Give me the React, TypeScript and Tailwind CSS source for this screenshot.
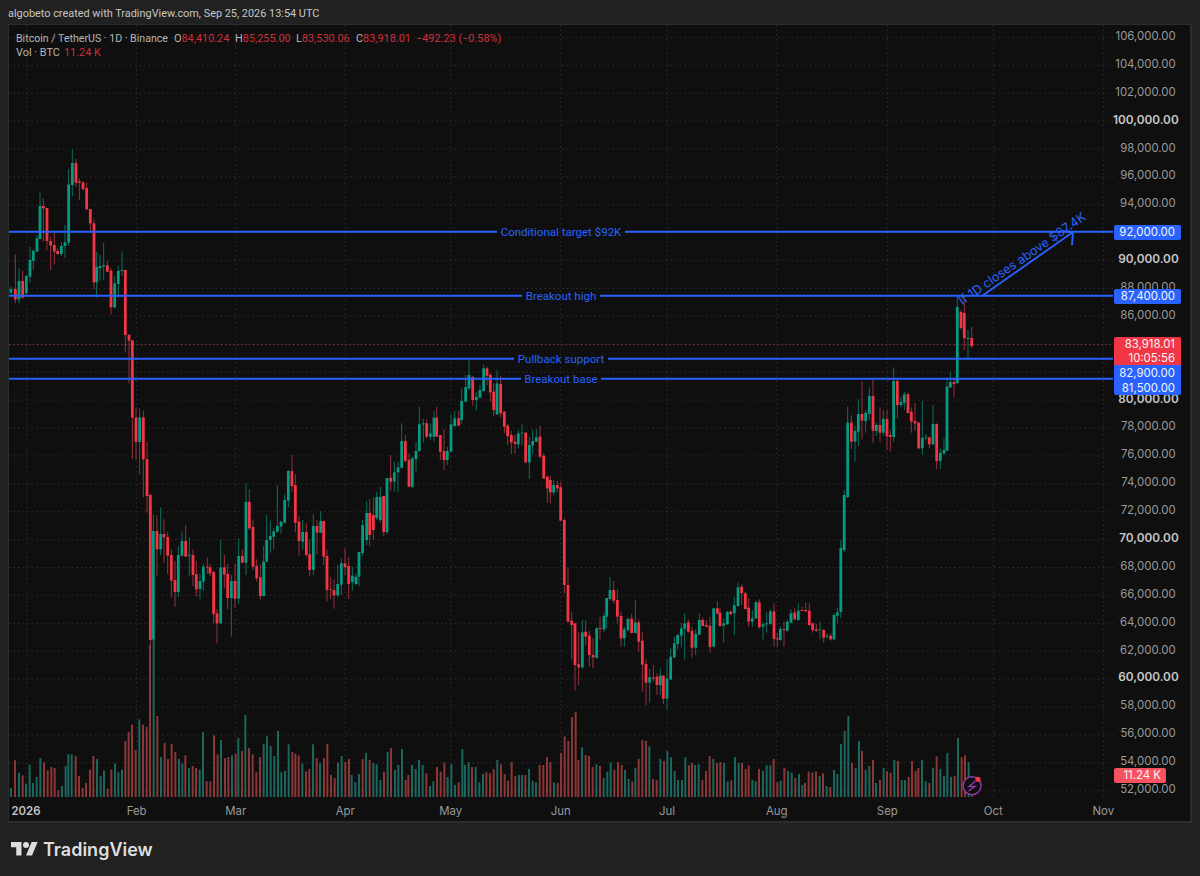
import React from "react";

type C = [number, number, number, number, number, number];
// [x, teal?, body top, body bottom, high, low] in the coordinates of each group
const groups: { x0: number; y0: number; s: number; d: C[] }[] = [
  { x0: 0, y0: 140, s: 3, d: [
    [33,1,447,458,440,470],[46,0,447,478,343,490],[57,1,423,478,385,490],[68,0,423,473,393,475],[79,1,408,460,405,462],[90,1,360,410,320,427],[100,1,333,362,327,390],[111,1,295,335,285,335],[120,1,198,297,157,298],[130,0,198,205,175,305],[141,0,204,303,204,330],[152,0,303,317,290,390],[163,0,315,335,275,373],[173,0,333,342,325,345],[184,1,318,342,308,348],[195,1,307,318,255,354],[206,1,133,308,87,318],[217,1,69,135,28,168],[228,0,69,128,57,142],[238,0,124,128,115,180],[249,0,127,148,125,150],[260,0,144,208,128,210],[271,0,207,250,207,278],[282,0,250,427,238,448],[290,1,381,427,335,473],[300,1,378,384,344,422],[311,1,376,380,308,420],[322,0,376,395,362,397],[333,0,392,502,385,524],[344,1,430,502,408,505],[355,1,393,432,378,473],[366,1,390,393,335,408],[376,0,390,585,388,638],[387,0,585,602,582,730],[397,0,601,833,601,958],[408,0,833,906,803,960],[419,1,832,906,805,1003],[430,0,832,958,812,1071],[441,0,957,1068,905,1118],
  ]},
  { x0: 120, y0: 460, s: 3, d: [
    [91,0,105,540,100,555],[100,1,213,538,163,540],[111,0,213,268,165,348],[122,1,222,268,142,285],[132,0,222,232,178,308],[143,0,231,287,215,342],[154,0,285,362,268,412],[165,0,360,396,303,440],[175,1,285,396,258,412],[186,1,243,287,215,292],[197,0,243,290,196,290],[208,1,284,287,232,350],[219,0,285,345,268,378],[229,0,343,388,302,410],[240,1,363,387,340,418],[250,1,320,365,310,392],[262,0,320,323,293,342],[270,0,322,340,312,348],[281,0,335,462,335,490],[291,0,460,490,448,550],[302,1,322,490,240,492],[313,0,322,344,285,385],[323,0,342,414,312,448],[334,1,363,414,345,530],[345,0,363,416,312,443],[356,1,288,416,235,432],[367,0,288,308,268,308],[378,1,126,308,70,345],[388,0,126,205,88,210],[399,0,201,320,178,330],[410,0,318,355,298,365],[421,0,352,408,312,418],[431,1,305,408,258,410],[440,1,240,305,165,305],[451,1,228,240,182,278],[461,1,214,230,205,268],[472,1,198,215,75,218],[483,1,185,200,182,222],[494,1,120,188,103,190],[505,1,33,122,30,142],[516,0,33,78,-15,95],[526,0,75,188,42,217],[537,0,185,243,168,287],[548,1,216,245,180,270],[559,0,216,285,190,290],[569,0,283,330,238,347],[580,1,198,330,162,345],[591,0,198,218,180,283],[602,1,183,218,153,220],[611,0,183,290,183,315],[621,0,288,390,270,425],[632,0,388,390,352,418],[642,0,390,406,358,446],[653,1,372,406,315,410],[664,1,310,374,295,405],[675,0,310,322,265,345],[686,0,318,372,292,417],[697,1,347,366,320,392],[708,1,350,372,340,375],[717,1,276,350,276,378],
  ]},
  { x0: 0, y0: 0, s: 1, d: [
    [362.6,1,525,553,520,556],[366.7,1,513,540,501,545],[369.7,0,513,535,499,546],[373.4,0,515,530,497,540],[376.7,1,497,518,492,520],[380.3,1,497,520,487,522],[383.7,0,496,532,496,536],[387,1,478,532,478,534],
    [840.8,1,548,612,540,618],[844.2,1,495,550,490,552],
    [957.3,1,307,383,296,384],[961,0,312,328,310,330],[964.3,0,313,338,298,350],[968,1,338,339,330,358],[971.7,0,338,346,327,348],
  ]},
  { x0: 340, y0: 355, s: 3, d: [
    [152,0,368,380,300,408],[163,1,352,380,320,410],[174,1,337,352,320,412],[185,1,258,338,205,340],[196,0,258,318,240,322],[207,0,315,395,295,395],[217,1,310,395,305,398],[228,1,288,312,262,350],[238,1,208,288,155,290],[250,1,205,208,192,262],[260,0,205,245,192,250],[271,1,235,245,205,255],[282,1,188,245,168,260],[290,0,188,245,155,245],[301,0,240,290,240,315],[312,0,288,315,222,345],[322,1,288,315,275,330],[333,1,208,290,178,292],[344,1,190,213,168,215],[356,0,190,212,168,210],[365,1,138,195,100,207],[377,1,96,140,60,142],[387,1,60,100,15,105],[398,0,66,135,62,152],[409,1,125,135,112,165],[420,1,105,128,90,130],[431,1,40,108,30,110],[441,0,40,62,35,90],[451,0,60,112,55,140],[461,0,110,165,85,183],[471,1,85,178,45,180],[482,0,87,175,63,188],[493,0,170,215,168,235],[503,0,212,243,208,270],[514,0,240,262,228,297],[525,0,260,267,240,295],[535,1,235,268,225,280],[546,1,233,235,208,270],[557,0,233,322,232,325],[568,1,270,322,245,372],[578,1,258,272,225,298],[589,1,247,260,222,262],[600,0,245,305,212,310],[611,0,302,370,295,372],[622,0,365,400,362,443],[631,0,375,412,362,445],[641,1,390,412,375,420],[652,0,390,400,378,412],[662,0,397,497,380,497],
  ]},
  { x0: 555, y0: 570, s: 3, d: [
    [28,0,-150,45,-155,70],[39,0,45,155,-5,155],[50,0,152,165,125,268],[60,0,160,285,160,362],[71,0,283,292,185,345],[82,1,187,292,150,297],[92,0,185,200,152,225],[103,0,197,255,183,290],[114,0,255,262,205,295],[125,1,175,264,170,265],[135,0,174,177,140,208],[147,1,138,178,128,185],[155,1,84,140,84,175],[165,1,60,87,20,92],[176,0,60,92,32,100],[187,0,90,140,57,160],[198,0,138,205,125,230],[208,1,178,205,170,230],[219,1,147,180,143,185],[230,0,146,189,132,190],[241,1,157,189,90,190],[251,0,157,215,148,245],[262,0,212,284,185,365],[273,0,282,338,268,405],[284,1,322,338,295,397],[295,0,322,326,285,335],[306,0,320,345,310,375],[316,1,317,345,295,375],[325,0,317,386,315,402],[336,1,325,386,268,418],[347,1,260,328,235,330],[358,1,220,262,200,265],[368,1,195,222,192,238],[379,1,175,197,158,232],[389,1,160,176,130,268],[400,0,157,185,148,188],[411,0,183,233,170,263],[422,1,192,233,178,255],[433,1,150,194,130,195],[443,0,150,168,142,168],[454,0,165,170,150,172],[465,0,167,231,140,248],[476,1,115,230,115,232],[487,0,115,130,93,135],[495,0,128,168,115,170],[506,1,160,167,145,218],[517,1,125,163,123,165],[527,0,125,133,120,135],[538,1,106,130,80,195],[549,1,52,108,37,110],[560,0,50,70,43,105],[571,0,70,117,65,118],[581,0,113,155,85,170],[592,1,145,155,120,170],[603,1,97,145,93,147],[613,0,97,172,88,175],[624,1,163,170,155,210],[635,1,160,163,127,188],[646,1,124,162,118,165],[657,0,124,207,100,230],[667,0,205,208,190,230],[676,1,177,210,170,212],[687,0,177,180,155,230],[697,1,155,182,150,185],[708,1,130,158,118,160],[719,0,128,148,115,150],[730,1,122,150,100,152],[741,0,120,123,110,123],[752,0,120,124,98,125],[763,0,122,165,100,168],[773,0,160,180,158,188],[784,0,178,183,162,185],[795,1,178,180,157,208],[806,0,180,203,178,218],[816,1,197,200,190,205],[827,0,197,208,190,212],[837,1,135,208,130,210],[847,1,127,137,113,158],
  ]},
  { x0: 830, y0: 350, s: 3, d: [
    [53,1,218,441,170,445],[64,0,218,275,196,297],[75,1,243,275,228,335],[85,1,192,245,148,288],[96,0,192,212,95,268],[107,1,188,213,180,248],[118,1,138,192,112,210],[129,0,138,242,85,278],[139,1,225,243,218,258],[150,0,225,248,172,275],[160,1,207,248,180,258],[171,0,207,259,180,300],[181,0,255,261,240,304],[191,1,93,261,52,275],[202,0,93,165,87,205],[213,1,155,165,140,172],[223,1,133,158,125,180],[234,0,133,189,128,190],[244,0,185,215,172,248],[255,0,213,220,158,243],[266,0,218,295,215,297],[277,1,263,295,153,315],[288,1,262,264,252,272],[298,0,262,283,260,295],[309,1,222,283,165,285],[320,0,222,333,220,358],[331,1,308,333,295,357],[342,1,300,310,265,315],[351,1,110,302,85,302],[361,1,96,112,67,114],[372,0,96,102,85,142],
  ]},
];

const candles = groups.flatMap((g) =>
  g.d.map(([x, t, a, b, h, l]) => ({
    x: g.x0 + x / g.s,
    teal: t === 1,
    top: g.y0 + a / g.s,
    bottom: g.y0 + b / g.s,
    high: g.y0 + h / g.s,
    low: g.y0 + l / g.s,
  }))
);

// volume: "zoomX,colour,zoomTop"
const v1 =
  "33t228 45r145 57t182 68r190 78t215 89t158 99t213 110t195 121t138 132r152 143r175 154r165 164r168 175r235 186t222 197t162 205t127 215t127 227r132 237r192 248r228 258r213 270r173 280r132 291t141 302t192 312t176 323r230 334r173 345t154 355t181 366t173 376r87 386r60 396r38 407r114 418t22 429r38 440r44 450r-201 461t-219 472r12 483t135 494r93 504r141 515r96 526r120 537t141 547t154 556r130 567t168 578r162 588r168 599t173 609t60 620r208 631r208 642r70 653r127 663t84 675r138 685r135 696t130 707r125 715t78 726r117 736t9 747r108 758r127 769r181 780r135 791t96 801t73 812t102 823t132 834t57 844t181 855t177 866t97 877r120 886r125 896r130 907t154 918r178 928r171 939t97 950r138 960t154 972r138 982r96 993r189 1004r198 1014t152";
const v2 =
  "5t132 16r150 27r141 35t189 46t211 57t186 68r141 78t123 89r144 100t153 110t157 121t204 132r179 143t120 153r108 165t174 175t159 186t111 197r204 205r189 216t159 227t171 237t144 248t159 259r184 270t222 280t208 291r165 302r179 313r152 323t195 334t157 345t219 356r211 367t111 375t159 386t150 396r165 407t165 418t211 429t186 439r181 450r184 461r171 472t144 483r157 494r186 504r206 515r150 526r192 537t189 546t189 556r189 567t171 578t206 588t211 599r159 610r159 621r135 631r150 642t211 653r213 663r123 674r73 685r87 696r15 707r0 715r144 726t106 737r129 747r132 758r165 769t157 780r162 791t198 802t179 812t152 823r174 834r150 845r159 855t174 866t201 877r208 886t168 896r141 907r84 918r87 928t103 939r201 950r204 961t141 972r147 982t117 993t136 1004t177 1014t204";
const v3 =
  "66t204 76t136 87r160 96r153 105t159 116t157 127r204 138r177 149r132 160t141 171r153 181r150 192t153 203t208 214r205 225t136 236t153 246r153 257r171 266r160 277t204 287t208 297r171 309t177 320t160 331t160 341r141 352r211 362t206 373r168 384t177 395t182 406r198 417t186 427t219 435r213 446r179 457r182 468r179 479t192 489r184 500t222 511r225 522t174 532t186 543t96 554t57 565t12 576r153 587t168 597t87 606r117 617t174 628t162 639r144 648t213 660r204 671t168 681r177 692r182 703t144 714r147 725t204 735t204 746r195 756r147 767r177 775r168 786t144 797t208 808r213 819t168 830r133 841t171 852t192 862t123 873t195 884r192 894t78 905r136 915r130 926t150 937r250";
const parseVol = (s: string, x0: number) =>
  s.split(" ").map((e) => {
    const m = e.match(/^(\d+)([tr])(-?\d+)$/)!;
    return { x: x0 + Number(m[1]) / 3, teal: m[2] === "t", top: 712 + Number(m[3]) / 3 };
  });
const volumes = [...parseVol(v1, 0), ...parseVol(v2, 340), ...parseVol(v3, 660)];

const gridX = [26.7, 136.6, 235.7, 345.2, 450.7, 560.7, 667, 776.7, 887.3, 993.3, 1103.3];
const prices: number[] = [];
for (let p = 106000; p >= 52000; p -= 2000) prices.push(p);
const gy = (p: number) => 149 + (98000 - p) * 0.01395;
const fmt = (p: number) => p.toLocaleString("en-US") + ".00";
const bright = new Set([100000, 90000, 80000, 70000, 60000]);
const hiddenByTag = new Set([92000, 84000, 82000]);

const months = [
  { t: "2026", x: 26, b: true },
  { t: "Feb", x: 136.6 },
  { t: "Mar", x: 235.7 },
  { t: "Apr", x: 345.2 },
  { t: "May", x: 450.7 },
  { t: "Jun", x: 560.7 },
  { t: "Jul", x: 667 },
  { t: "Aug", x: 776.7 },
  { t: "Sep", x: 887.3 },
  { t: "Oct", x: 993.3 },
  { t: "Nov", x: 1103.3 },
];

const hlines = [
  { y: 231.7, a: 497, b: 625 },
  { y: 295.7, a: 522, b: 600 },
  { y: 358.7, a: 514, b: 608 },
  { y: 378.7, a: 521, b: 601 },
];

const BLUE = "#2962ff";

function Chart() {
  return (
    <svg viewBox="9 25 1104 772" className="block w-[1104px] h-[772px]">
      {gridX.map((x) => (
        <line key={x} x1={x} x2={x} y1={25} y2={797} stroke="#2e2e2e" strokeWidth={1} strokeDasharray="1.5 3" />
      ))}
      {prices.map((p) => (
        <line key={p} x1={9} x2={1113} y1={gy(p)} y2={gy(p)} stroke="#2e2e2e" strokeWidth={1} strokeDasharray="1.5 3" />
      ))}
      {volumes.map((v, i) => (
        <rect key={i} x={v.x - 1} y={v.top} width={2} height={Math.max(0, 797 - v.top)} fill={v.teal ? "#1b675e" : "#8b3737"} />
      ))}
      {candles.map((c, i) => (
        <g key={i}>
          <rect x={c.x - 0.5} y={c.high} width={1} height={Math.max(0, c.low - c.high)} fill={c.teal ? "#0b6f5f" : "#99303b"} />
          <rect x={c.x - 1.4} y={c.top} width={2.8} height={Math.max(0.8, c.bottom - c.top)} fill={c.teal ? "#089981" : "#f23645"} />
        </g>
      ))}
      <line x1={9} x2={1113} y1={344.7} y2={344.7} stroke="#f23645" strokeOpacity={0.65} strokeWidth={1} strokeDasharray="1.5 2.5" />
      {hlines.map((l) => (
        <g key={l.y} stroke={BLUE} strokeWidth={1.9}>
          <line x1={9} x2={l.a} y1={l.y} y2={l.y} />
          <line x1={l.b} x2={1113} y1={l.y} y2={l.y} />
        </g>
      ))}
      <g stroke={BLUE} strokeWidth={1.9} fill="none">
        <path d="M982 296L1073 232" />
        <path d="M1062 231L1073 232L1072 245" />
      </g>
      <g fill="none">
        <circle cx={972} cy={785.7} r={9} stroke="#8f3aa8" strokeWidth={1.5} fill="#0f0f0f" />
        <path d="M975.5 781L969 786.5H975L968.5 791" stroke="#8f3aa8" strokeWidth={1.4} />
        <circle cx={978} cy={779.3} r={2.6} fill="#f23645" />
      </g>
    </svg>
  );
}

const lineLabels = [
  { t: "Conditional target $92K", top: "top-[199px]" },
  { t: "Breakout high", top: "top-[263px]" },
  { t: "Pullback support", top: "top-[326px]" },
  { t: "Breakout base", top: "top-[346px]" },
];

export default function App() {
  return (
    <div className="w-[1200px] h-[876px] bg-[#212121] flex flex-col overflow-hidden font-['Inter',sans-serif] text-[11.4px]">
      <div className="h-[24px] pl-[8px] pt-[6px] leading-[16px] text-[#c6c6c6] whitespace-nowrap font-['Roboto',sans-serif] text-[10.9px]">
        algobeto created with TradingView.com, Sep 25, 2026 13:54 UTC
      </div>
      <div className="relative ml-[8px] w-[1184px] h-[799px] border-l border-t border-r-2 border-b-2 border-[#2d2d2d] bg-[#0f0f0f] flex">
        <div className="w-[1104px] flex flex-col">
          <Chart />
          <div className="relative h-[24px] text-[#9a9a9a]">
            {months.map((m) => (
              <span
                key={m.t}
                className={`absolute top-[6px] -translate-x-1/2 leading-[16px] ${m.b ? "font-semibold text-[#c4c4c4]" : ""}`}
                style={{ left: m.x - 9 }}
              >
                {m.t}
              </span>
            ))}
          </div>
        </div>
        <div className="relative flex-1 flex flex-col items-end pr-[15px] text-[#9a9a9a]">
          {prices.map((p) => (
            <div
              key={p}
              className={`h-[27.9px] leading-[27.9px] whitespace-nowrap first:mt-[-2px] ${bright.has(p) ? "font-semibold text-[11.8px] text-[#c8c8c8] mr-[-3px]" : ""}`}
            >
              {hiddenByTag.has(p) ? "" : fmt(p)}
            </div>
          ))}
          <div className="absolute left-[1px] top-[200px] w-[67px] h-[15px] leading-[15px] bg-[#2962ff] text-[#f5f5f5] text-right pr-[6px] rounded-[2px]">92,000.00</div>
          <div className="absolute left-[1px] top-[264px] w-[67px] h-[15px] leading-[15px] bg-[#2962ff] text-[#f5f5f5] text-right pr-[6px] rounded-[2px]">87,400.00</div>
          <div className="absolute left-[1px] top-[312px] w-[67px] h-[28px] leading-[14px] bg-[#f23645] text-[#f5f5f5] text-right pr-[6px] rounded-t-[2px]">
            <div>83,918.01</div>
            <div>10:05:56</div>
          </div>
          <div className="absolute left-[1px] top-[340px] w-[67px] h-[16px] leading-[16px] bg-[#2962ff] text-[#f5f5f5] text-right pr-[6px]">82,900.00</div>
          <div className="absolute left-[1px] top-[356px] w-[67px] h-[14px] leading-[14px] bg-[#2962ff] text-[#f5f5f5] text-right pr-[6px] rounded-b-[2px]">81,500.00</div>
          <div className="absolute left-[1px] top-[743px] w-[52px] h-[15px] leading-[15px] bg-[#f7525f] text-[#f5f5f5] text-right pr-[5px] rounded-[2px]">11.24 K</div>
        </div>

        {/* legend */}
        <div className="absolute left-[7px] top-[7px] leading-[14px] text-[#b6b6b6] whitespace-nowrap font-['Roboto',sans-serif] text-[10.9px]">
          <div className="flex h-[14px]">
            <span className="w-[158px] text-[10.6px]">Bitcoin / TetherUS · 1D · Binance</span>
            <span className="w-[61px]">O<span className="text-[#cf2f3d]">84,410.24</span></span>
            <span className="w-[61px]">H<span className="text-[#cf2f3d]">85,255.00</span></span>
            <span className="w-[60px]">L<span className="text-[#cf2f3d]">83,530.06</span></span>
            <span className="w-[60px]">C<span className="text-[#cf2f3d]">83,918.01</span></span>
            <span className="text-[#cf2f3d]">−492.23 (−0.58%)</span>
          </div>
          <div className="flex h-[14px]">
            <span className="w-[48px]">Vol · BTC</span>
            <span className="text-[#cf2f3d]">11.24 K</span>
          </div>
        </div>

        {/* drawing labels */}
        {lineLabels.map((l) => (
          <span key={l.t} className={`absolute left-[552px] -translate-x-1/2 leading-[16px] text-[#2962ff] whitespace-nowrap font-['Roboto',sans-serif] text-[11.5px] ${l.top}`}>
            {l.t}
          </span>
        ))}
        <span className="absolute left-[951px] top-[269px] origin-left rotate-[-34.8deg] leading-[16px] text-[#2962ff] whitespace-nowrap text-[12.5px]">
          If 1D closes above $87.4K
        </span>
      </div>
      <div className="flex-1 flex items-start pl-[11px] pt-[15px] gap-[5px] text-[#dedede]">
        <svg viewBox="0 4 36 18" className="w-[27px] h-[13.5px] mt-[4px]">
          <path d="M14 22H7V11H0V4h14v18zM28 22h-8l7.5-18h8L28 22z" fill="currentColor" />
          <circle cx="20" cy="8" r="4" fill="currentColor" />
        </svg>
        <span className="text-[18px] leading-[24px] font-semibold whitespace-nowrap">TradingView</span>
      </div>
    </div>
  );
}
